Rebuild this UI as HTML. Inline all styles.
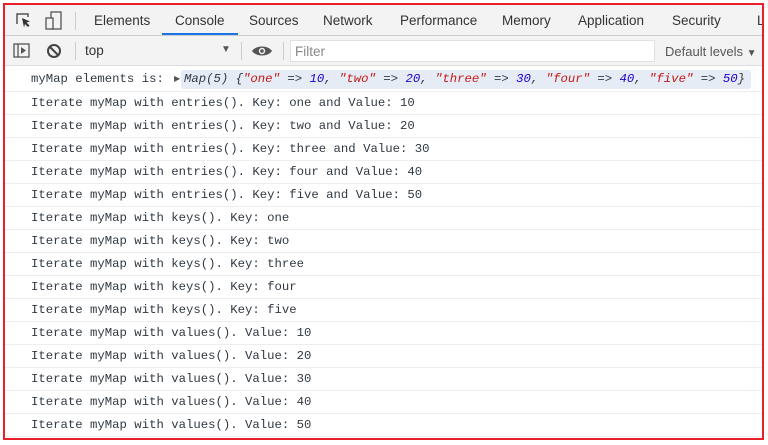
<!DOCTYPE html>
<html><head><style>
*{margin:0;padding:0;box-sizing:border-box}
body{width:768px;height:445px;background:#fff;position:relative;overflow:hidden;font-family:"Liberation Sans",sans-serif}
#frame{position:absolute;left:3px;top:3px;width:761px;height:437px;border:2px solid #e8202a;overflow:hidden;background:#fff}
.tabs{position:absolute;left:0;top:0;width:100%;height:31px;background:#f3f3f3;border-bottom:1px solid #ccc}
.tab{position:absolute;top:8px;font-size:13.5px;color:#333}
.tool{position:absolute;left:0;top:31px;width:100%;height:30px;background:#f3f3f3;border-bottom:1px solid #ddd}
.sep{position:absolute;width:1px;background:#ccc}
.rows{position:absolute;left:0;top:61px;width:100%}
.row{height:23px;border-bottom:1px solid #eee;font-family:"Liberation Mono",monospace;font-size:12.3px;color:#303942;padding-left:26px;line-height:22px;white-space:pre}
.s{color:#c41a16}.n{color:#1c00cf}
</style></head><body>
<div id="frame">
<div class="tabs">
<svg style="position:absolute;left:10px;top:7px" width="18" height="18" viewBox="0 0 18 18"><path d="M2 12V2h11v3" fill="none" stroke="#555" stroke-width="1.5"/><path d="M7 6l8 3.5-3.5 1 3 3-1.5 1.5-3-3-1 3.5z" fill="#333"/></svg>
<svg style="position:absolute;left:40px;top:6px" width="18" height="20" viewBox="0 0 18 20"><rect x="6" y="1" width="10" height="17" fill="none" stroke="#555" stroke-width="1.3"/><rect x="1" y="7" width="7" height="11" fill="#f3f3f3" stroke="#555" stroke-width="1.3"/></svg>
<div class="sep" style="left:70px;top:7px;height:18px"></div>
<span class="tab" style="left:89px">Elements</span>
<span class="tab" style="left:170px">Console</span>
<div style="position:absolute;left:157px;top:28px;width:76px;height:2px;background:#1a73e8"></div>
<span class="tab" style="left:244px">Sources</span>
<span class="tab" style="left:318px">Network</span>
<span class="tab" style="left:395px">Performance</span>
<span class="tab" style="left:497px">Memory</span>
<span class="tab" style="left:573px">Application</span>
<span class="tab" style="left:667px">Security</span>
<span class="tab" style="left:752px">L</span>
</div>
<div class="tool">
<svg style="position:absolute;left:8px;top:7px" width="18" height="16" viewBox="0 0 18 16"><rect x="1" y="1" width="15" height="13" fill="none" stroke="#555" stroke-width="1.3"/><line x1="5" y1="1" x2="5" y2="14" stroke="#555" stroke-width="1.3"/><path d="M8 4l5 3.5-5 3.5z" fill="#555"/></svg>
<svg style="position:absolute;left:41px;top:7px" width="16" height="16" viewBox="0 0 16 16"><circle cx="8" cy="8" r="6" fill="none" stroke="#444" stroke-width="2"/><line x1="4" y1="4" x2="12" y2="12" stroke="#444" stroke-width="2"/></svg>
<div class="sep" style="left:70px;top:6px;height:18px"></div>
<span style="position:absolute;left:80px;top:7px;font-size:13.5px;color:#333">top</span>
<span style="position:absolute;left:216px;top:8px;font-size:10px;color:#555">▼</span>
<div class="sep" style="left:236px;top:6px;height:18px"></div>
<svg style="position:absolute;left:246px;top:8px" width="22" height="14" viewBox="0 0 22 14"><path d="M1 7C5 1 17 1 21 7C17 13 5 13 1 7z" fill="#555"/><circle cx="11" cy="7" r="3.2" fill="#f3f3f3"/><circle cx="11" cy="7" r="1.8" fill="#555"/></svg>
<div class="sep" style="left:278px;top:6px;height:18px"></div>
<div style="position:absolute;left:285px;top:4px;width:365px;height:22px;background:#fff;border:1px solid #e0e0e0"></div>
<span style="position:absolute;left:290px;top:8px;font-size:13.5px;color:#888">Filter</span>
<span style="position:absolute;left:660px;top:8px;font-size:13px;color:#555">Default levels <span style="font-size:10px">▼</span></span>
</div>
<div class="rows">
<div class="row" style="height:26px;line-height:26px;position:relative">myMap elements is: <span style="position:absolute;left:169px;top:3px;font-size:8px;line-height:20px;color:#555;font-family:'Liberation Sans'">▶</span><span style="position:absolute;left:176px;top:4px;height:19px;width:570px;background:#e6ecf5;border-radius:3px;line-height:19px;padding-left:3px;font-style:italic">Map(5) {<span class="s">"one"</span> =&gt; <span class="n">10</span>, <span class="s">"two"</span> =&gt; <span class="n">20</span>, <span class="s">"three"</span> =&gt; <span class="n">30</span>, <span class="s">"four"</span> =&gt; <span class="n">40</span>, <span class="s">"five"</span> =&gt; <span class="n">50</span>}</span></div>
<div class="row">Iterate myMap with entries(). Key: one and Value: 10</div>
<div class="row">Iterate myMap with entries(). Key: two and Value: 20</div>
<div class="row">Iterate myMap with entries(). Key: three and Value: 30</div>
<div class="row">Iterate myMap with entries(). Key: four and Value: 40</div>
<div class="row">Iterate myMap with entries(). Key: five and Value: 50</div>
<div class="row">Iterate myMap with keys(). Key: one</div>
<div class="row">Iterate myMap with keys(). Key: two</div>
<div class="row">Iterate myMap with keys(). Key: three</div>
<div class="row">Iterate myMap with keys(). Key: four</div>
<div class="row">Iterate myMap with keys(). Key: five</div>
<div class="row">Iterate myMap with values(). Value: 10</div>
<div class="row">Iterate myMap with values(). Value: 20</div>
<div class="row">Iterate myMap with values(). Value: 30</div>
<div class="row">Iterate myMap with values(). Value: 40</div>
<div class="row">Iterate myMap with values(). Value: 50</div>
</div>
</div>
</body></html>
